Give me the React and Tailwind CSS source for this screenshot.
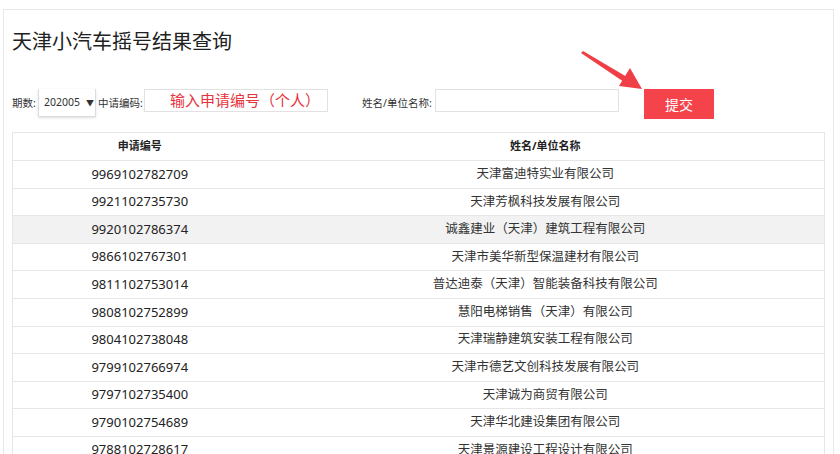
const rows = [
  ['9969102782709', '天津富迪特实业有限公司'],
  ['9921102735730', '天津芳枫科技发展有限公司'],
  ['9920102786374', '诚鑫建业（天津）建筑工程有限公司'],
  ['9866102767301', '天津市美华新型保温建材有限公司'],
  ['9811102753014', '普达迪泰（天津）智能装备科技有限公司'],
  ['9808102752899', '慧阳电梯销售（天津）有限公司'],
  ['9804102738048', '天津瑞静建筑安装工程有限公司'],
  ['9799102766974', '天津市德艺文创科技发展有限公司'],
  ['9797102735400', '天津诚为商贸有限公司'],
  ['9790102754689', '天津华北建设集团有限公司'],
  ['9788102728617', '天津景源建设工程设计有限公司'],
];

const font = { fontFamily: '"Noto Sans", "Noto Sans CJK SC", sans-serif' };

function Arrow() {
  return (
    <svg className="absolute left-0 top-0 pointer-events-none" width="840" height="454">
      <polygon points="581,53 583,51 627,77 624,82" fill="#ef3e45" />
      <polygon points="642,89 619,86 630,68" fill="#ef3e45" />
    </svg>
  );
}

export default function App() {
  return (
    <div className="relative h-[454px] w-[840px] overflow-hidden bg-white text-[#333]" style={font}>
      <div className="ml-[3px] mt-[9px] h-[460px] w-[831px] border border-[#e8e8e8] pl-[8px]">
        <h1 className="mt-[19px] text-[20px] leading-[26px] text-[#222]">天津小汽车摇号结果查询</h1>

        <div className="mt-[34px] flex items-start text-[10.5px]">
          <span className="mt-[7px] w-[26px]">期数:</span>
          <div className="flex h-[28px] w-[58px] items-center border-x border-b border-[#ddd] pl-[5px] text-[10.5px] shadow-sm">
            <span>202005</span>
            <span className="ml-[6px] text-[8px]">▼</span>
          </div>
          <span className="ml-[2px] mt-[7px] w-[46px]">中请编码:</span>
          <div className="flex h-[23px] w-[184px] items-center border border-[#e2e2e2] pl-[25px] text-[15px] text-[#e8333c]">
            输入申请编号（个人）
          </div>
          <span className="ml-[34px] mt-[7px] w-[73px] text-[10.5px]">姓名/单位名称:</span>
          <div className="h-[23px] w-[184px] border border-[#e2e2e2]" />
          <button className="ml-[25px] h-[30px] w-[70px] bg-[#f5434b] text-[14px] text-white">提交</button>
        </div>

        <table className="mt-[13px] w-[813px] border-collapse border border-[#e6e6e6] text-center">
          <thead>
            <tr className="h-[28px] border-b border-[#e6e6e6]">
              <th className="w-[254px] text-[11px] font-bold text-[#222]">申请编号</th>
              <th className="text-[11px] font-bold text-[#222]">姓名/单位名称</th>
            </tr>
          </thead>
          <tbody>
            {rows.map(([code, name], i) => (
              <tr key={code} className={`h-[27.6px] border-b border-[#e6e6e6] ${i === 2 ? 'bg-[#f2f2f2]' : ''}`}>
                <td className="text-[13px] text-[#222]">{code}</td>
                <td className="text-[12.5px] text-[#333]">{name}</td>
              </tr>
            ))}
          </tbody>
        </table>
      </div>
      <Arrow />
    </div>
  );
}
